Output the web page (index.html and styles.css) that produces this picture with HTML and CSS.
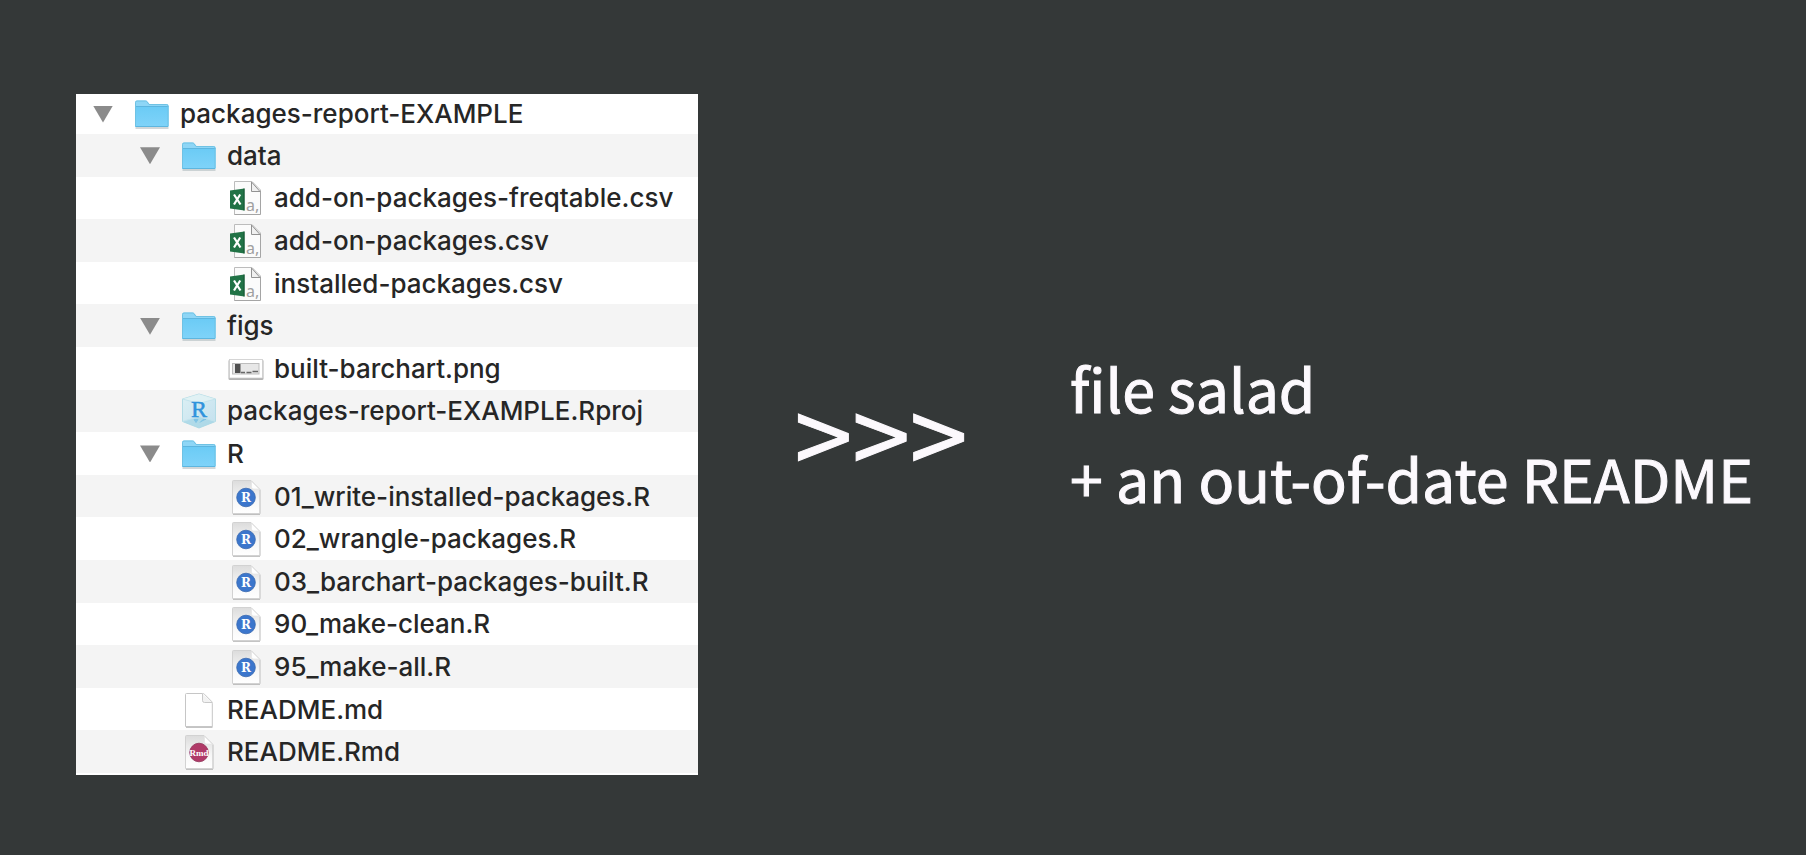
FILE: index.html
```html
<!DOCTYPE html>
<html lang="en">
<head>
<meta charset="utf-8">
<title>packages-report-EXAMPLE</title>
<link rel="stylesheet" href="styles.css">
</head>
<body>
<svg class="defs" aria-hidden="true">
  <defs>
    <linearGradient id="g-folder" x1="0" y1="0" x2="0" y2="1"><stop offset="0" stop-color="#6bcbf5"/><stop offset="1" stop-color="#7fd3f9"/></linearGradient>
    <linearGradient id="g-page" x1="0" y1="0" x2="0" y2="1"><stop offset="0" stop-color="#dcdcdc"/><stop offset=".6" stop-color="#f7f7f7"/><stop offset="1" stop-color="#fff"/></linearGradient>
    <linearGradient id="g-cube" x1="0" y1="0" x2="1" y2="1"><stop offset="0" stop-color="#dcf0f4"/><stop offset="1" stop-color="#c3e0ee"/></linearGradient>
    <symbol id="folder" viewBox="0 0 36 36">
      <path d="M1.500 32h33" stroke="#a9b4b9" stroke-width="1.500" opacity=".7"/>
      <path d="M1 31V6.500Q1 4.500 3 4.500h8.500q1.200 0 2 1L15.500 8H33q1.500 0 1.500 1.500V31z" fill="#8ed6f6"/>
      <path d="M1 10.500h33.500V30q0 1-1 1H2q-1 0-1-1z" fill="url(#g-folder)"/>
      <path d="M1 10.500h33.500M1.500 30.500h32.500" stroke="#5db6df"/>
      <path d="M1.500 30V6.500Q1.500 5 3 5h8.500q1 0 1.600.8L15 8.500h17.500q1.500 0 1.500 1.500v20" fill="none" stroke="#6fc2e4"/>
    </symbol>
    <symbol id="csv" viewBox="0 0 36 36">
      <path d="M6.500 1.500H24L32.500 10v24.500h-26z" fill="#fbfbfb" stroke="#bcbcbc"/>
      <path d="M6.500 34.500h26M32.500 11v23" stroke="#a5a5a5"/>
      <path d="M23.500 2v9.500h8.500z" fill="#f0f0f0" stroke="#929292" stroke-linejoin="round"/>
      <text x="18" y="30.500" class="csv-text">a,</text>
      <path d="M2 10.500 16.500 8.500v22L2 28.500z" fill="#217346"/>
      <path d="M16 8.500v22" stroke="#175533"/>
      <path d="m6 14.500 6.500 10M12.200 14.500l-6.200 10" stroke="#fff" stroke-width="2.200"/>
    </symbol>
    <symbol id="png" viewBox="0 0 36 36">
      <rect x=".5" y="8.500" width="35" height="20.500" rx="1.500" fill="#8a8a8a" opacity=".65"/>
      <rect x="1.500" y="8.500" width="33" height="18.500" fill="#fff" stroke="#ccc" stroke-width=".7"/>
      <rect x="4.500" y="12.500" width="26.500" height="10.500" fill="#e7e7e7" stroke="#bdbdbd"/>
      <path d="M7 13h5.500v9H7z" fill="#505050"/>
      <path d="M13 21.500h4M18.500 21.500h5M24.500 20.500h5.500" stroke="#686868" stroke-width="1.500"/>
    </symbol>
    <symbol id="rproj" viewBox="0 0 36 36">
      <path d="M18 1 34.500 6v22.500L18 35 1.500 28.500V6z" fill="url(#g-cube)" stroke="#b3dce6"/>
      <path d="M1.500 6 18 10.500 34.500 6 18 1z" fill="#e4f3f4" opacity=".75"/>
      <path d="m1.500 28.500 16.500-5 16.500 5L18 35z" fill="#a6d6e5" opacity=".75"/>
      <path d="M1.500 6 18 10.500 34.500 6M1.500 28.500l16.500-5 16.500 5M18 10v14" fill="none" stroke="#c3e4ed"/>
      <path d="M13 26.500h4l-2 3zM19 29.500l3-3h3" fill="#67b9e4" stroke="#67b9e4" opacity=".65"/>
      <text x="18" y="23.500" class="cube-text">R</text>
    </symbol>
    <symbol id="page" viewBox="0 0 36 36">
      <path d="M5 35h26.500" stroke="#9d9d9d" stroke-width="1.200"/>
      <path d="M5.500 1.500h16.200q1 0 1.800.8l7 7q.8.800.8 2v23.200H4.500V2.500q0-1 1-1z" fill="#fff" stroke="#c6c6c6"/>
      <path d="M21.500 2v6.500q0 2 2 2H31" fill="#f2f2f2" stroke="#c9c9c9"/>
    </symbol>
    <symbol id="badge-page" viewBox="0 0 36 36">
      <path d="M5 35h27" stroke="#9d9d9d" stroke-width="1.200"/>
      <path d="M5.500 1.500H23l9 9v24H4.500v-32q0-1 1-1z" fill="url(#g-page)" stroke="#d2d2d2"/>
      <path d="M23.500 2.500v5.500q0 2 2 2h5.500z" fill="#fff" stroke="#e2e2e2" stroke-width=".6"/>
      <path d="M32 11v24" stroke="#cfcfcf"/>
    </symbol>
    <symbol id="rfile" viewBox="0 0 36 36">
      <use href="#badge-page" width="36" height="36"/>
      <circle cx="18" cy="18.500" r="9.300" fill="#3b76cc" stroke="#3566ae" stroke-width=".8"/>
      <text x="18" y="22.500" class="badge-r">R</text>
    </symbol>
    <symbol id="rmd" viewBox="0 0 36 36">
      <use href="#badge-page" width="36" height="36"/>
      <circle cx="18" cy="18.500" r="9.300" fill="#b03a68" stroke="#8f3056" stroke-width=".8"/>
      <text x="18" y="21.500" class="badge-rmd">Rmd</text>
    </symbol>
  </defs>
</svg>
<main class="slide">
  <ul class="tree">
    <li class="row"><button class="toggle" aria-label="Collapse packages-report-EXAMPLE"></button><svg class="icon"><use href="#folder"/></svg><span>packages-report-EXAMPLE</span></li>
    <li class="row level-1"><button class="toggle" aria-label="Collapse data"></button><svg class="icon"><use href="#folder"/></svg><span>data</span></li>
    <li class="row level-2 file"><svg class="icon"><use href="#csv"/></svg><span>add-on-packages-freqtable.csv</span></li>
    <li class="row level-2 file"><svg class="icon"><use href="#csv"/></svg><span>add-on-packages.csv</span></li>
    <li class="row level-2 file"><svg class="icon"><use href="#csv"/></svg><span>installed-packages.csv</span></li>
    <li class="row level-1"><button class="toggle" aria-label="Collapse figs"></button><svg class="icon"><use href="#folder"/></svg><span>figs</span></li>
    <li class="row level-2 file"><svg class="icon"><use href="#png"/></svg><span>built-barchart.png</span></li>
    <li class="row level-1 file"><svg class="icon"><use href="#rproj"/></svg><span>packages-report-EXAMPLE.Rproj</span></li>
    <li class="row level-1"><button class="toggle" aria-label="Collapse R"></button><svg class="icon"><use href="#folder"/></svg><span>R</span></li>
    <li class="row level-2 file"><svg class="icon"><use href="#rfile"/></svg><span>01_write-installed-packages.R</span></li>
    <li class="row level-2 file"><svg class="icon"><use href="#rfile"/></svg><span>02_wrangle-packages.R</span></li>
    <li class="row level-2 file"><svg class="icon"><use href="#rfile"/></svg><span>03_barchart-packages-built.R</span></li>
    <li class="row level-2 file"><svg class="icon"><use href="#rfile"/></svg><span>90_make-clean.R</span></li>
    <li class="row level-2 file"><svg class="icon"><use href="#rfile"/></svg><span>95_make-all.R</span></li>
    <li class="row level-1 file"><svg class="icon"><use href="#page"/></svg><span>README.md</span></li>
    <li class="row level-1 file"><svg class="icon"><use href="#rmd"/></svg><span>README.Rmd</span></li>
  </ul>
  <div class="arrows">&gt;&gt;&gt;</div>
  <p class="caption">file salad<br>+ an out-of-date README</p>
</main>
</body>
</html>
```
FILE: styles.css
```css
* { box-sizing: border-box; }

body {
  margin: 0;
  background: #343838;
}

.defs {
  position: absolute;
  width: 0;
  height: 0;
}

.slide {
  display: grid;
  grid-template-columns: 622fr 366fr 742fr;
  align-items: center;
  min-height: 100vh;
  padding: 94px 0 80px 76px;
  color: #fcf9fd;
}

.tree {
  display: grid;
  grid-template-rows: 40px repeat(15, 1fr);
  align-self: stretch;
  margin: 0;
  padding: 0 0 2px;
  list-style: none;
  background: #fff;
  color: #262626;
  font: 500 26px/32px Inter, "Liberation Sans", sans-serif;
}

.row {
  display: flex;
  align-items: center;
  gap: 10px;
  padding: 1px 0 0 17px;
  white-space: nowrap;
}

.row:first-child { padding-top: 0; }
.row:nth-child(even) { background: #f4f4f4; }

.row.level-1 { padding-left: 64px; }
.row.level-2 { padding-left: 111px; }
.file::before {
  content: "";
  width: 31px;
}

.toggle {
  width: 20px;
  height: 17px;
  margin-right: 11px;
  padding: 0;
  border: 0;
  background: #8b8b8b;
  clip-path: polygon(0 0, 100% 0, 50% 100%);
}

.icon {
  flex: none;
  width: 36px;
  height: 36px;
}

.csv-text { font: 16px "Noto Sans", sans-serif; fill: #a0a0a0; }
.cube-text { font: 24px "Liberation Serif", serif; fill: #2f93dc; stroke: #2f93dc; stroke-width: .5px; text-anchor: middle; }
.badge-r { font: bold 12px "DejaVu Serif", serif; fill: #fff; text-anchor: middle; }
.badge-rmd { font: bold 9px "Liberation Serif", serif; fill: #fff; text-anchor: middle; }

.arrows,
.caption {
  font-family: "Noto Sans CJK SC", sans-serif;
  -webkit-text-stroke: 1px #fcf9fd;
}

.arrows {
  padding-bottom: 8px;
  font-size: 104px;
  line-height: 120px;
  text-align: center;
}

.caption {
  margin: 0;
  padding: 0 0 4px 6px;
  font-size: 59px;
  line-height: 90px;
  white-space: nowrap;
}
```
